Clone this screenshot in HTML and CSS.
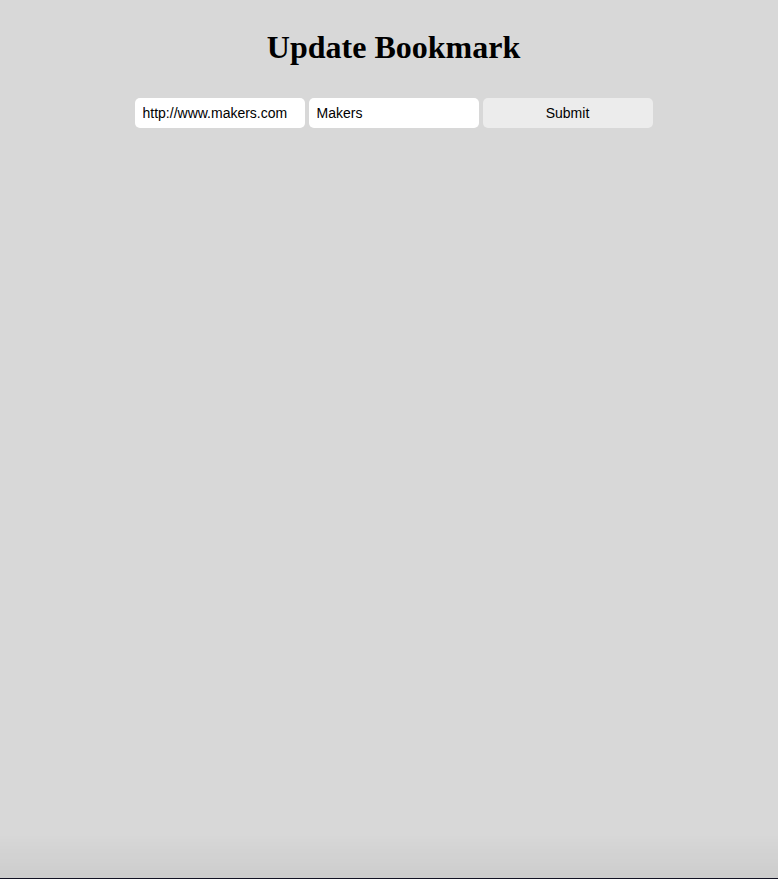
FILE: index.html
```html
<!DOCTYPE html>
<html>
<head>
<meta charset="utf-8">
<title>Update Bookmark</title>
<link rel="stylesheet" href="styles.css">
</head>
<body>
<main class="page">
  <h1 class="title">Update Bookmark</h1>
  <form class="form">
    <input class="field" type="text" value="http://www.makers.com">
    <input class="field" type="text" value="Makers">
    <button class="submit" type="button">Submit</button>
  </form>
</main>
<div class="shade"></div>
</body>
</html>
```
FILE: styles.css
```css
html, body {
  margin: 0;
  padding: 0;
  background: #d8d8d8;
  height: 100%;
}
.page {
  padding: 29px 0 0 9px;
  display: flex;
  flex-direction: column;
  align-items: center;
}
.title {
  margin: 0;
  font-family: "Liberation Serif", "Times New Roman", serif;
  font-size: 32px;
  font-weight: bold;
  line-height: 37px;
  color: #000;
}
.form {
  margin-top: 32px;
  display: flex;
  gap: 4px;
}
.field, .submit {
  box-sizing: border-box;
  width: 170px;
  height: 30px;
  border: none;
  border-radius: 5px;
  font-family: "Liberation Sans", Arial, sans-serif;
  font-size: 14px;
  color: #000;
  outline: none;
  padding-top: 1px;
}
.field {
  background: #fff;
  padding-left: 8px;
  padding-right: 8px;
}
.submit {
  background: #ececec;
  text-align: center;
}
.shade {
  position: fixed;
  left: 0;
  right: 0;
  bottom: 0;
  height: 45px;
  background: linear-gradient(to bottom, rgba(0,0,0,0) 0%, rgba(0,0,0,0.05) 100%);
  border-bottom: 1px solid #111122;
  box-sizing: border-box;
}
```
